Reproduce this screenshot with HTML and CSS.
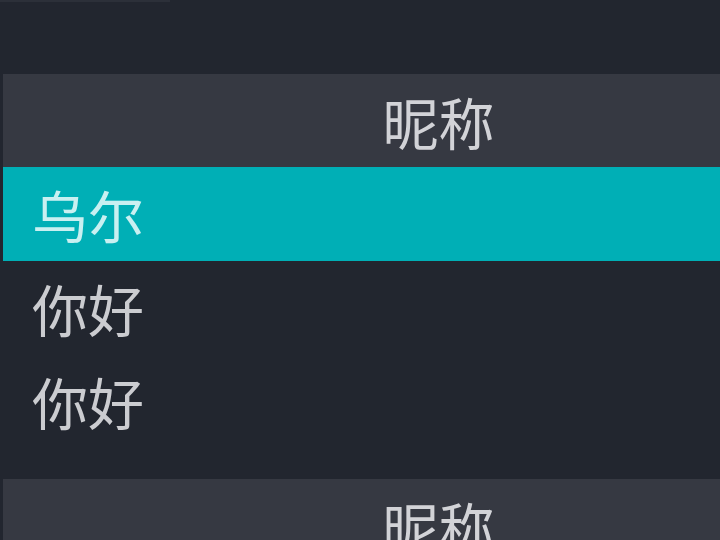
FILE: index.html
```html
<!DOCTYPE html>
<html lang="zh">
<head>
<meta charset="utf-8">
<link rel="stylesheet" href="styles.css">
</head>
<body>
<div class="topline"></div>
<div class="page">
  <section class="table">
    <div class="head">昵称</div>
    <div class="row selected">乌尔</div>
    <div class="row">你好</div>
    <div class="row">你好</div>
  </section>
  <section class="table">
    <div class="head">昵称</div>
  </section>
</div>
</body>
</html>
```
FILE: styles.css
```css
html, body {
  margin: 0;
  padding: 0;
  background: #22262f;
  width: 720px;
  height: 540px;
  overflow: hidden;
  font-family: "Noto Sans CJK SC", "Noto Sans", sans-serif;
}
.topline {
  width: 170px;
  height: 2px;
  background: #2c3039;
}
.page {
  padding-top: 72px;
  padding-left: 3px;
  display: flex;
  flex-direction: column;
  gap: 32px;
}
.table {
  display: flex;
  flex-direction: column;
}
.head {
  height: 93px;
  background: #363942;
  color: #d2d3d7;
  font-size: 56px;
  line-height: 93px;
  display: flex;
  justify-content: center;
  padding-left: 154px;
}
.row {
  height: 93px;
  line-height: 93px;
  font-size: 56px;
  color: #cbccd0;
  padding-left: 29px;
}
.row.selected {
  background: #00afb6;
  color: #c9f0f1;
  height: 94px;
}
```
